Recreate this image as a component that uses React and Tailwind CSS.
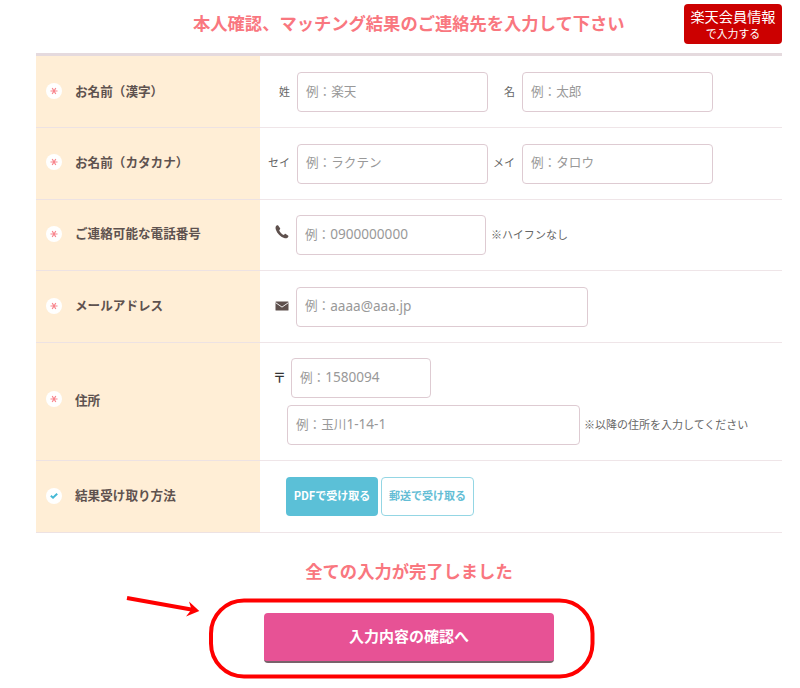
const Badge = ({ check }) => (
  <span className="flex size-4 shrink-0 items-center justify-center rounded-full bg-white">
    {check ? (
      <svg width="8" height="8" viewBox="0 0 8 8" fill="none" stroke="#45b9d6" strokeWidth="1.9">
        <path d="M0.8 3.8 3 5.8 7.2 1.7" />
      </svg>
    ) : (
      <svg width="8" height="8" viewBox="0 0 8 8" fill="none" stroke="#f8858d" strokeWidth="1.2">
        <path d="M0.5 4H7.5M2.2 1 5.8 7M5.8 1 2.2 7" />
      </svg>
    )}
  </span>
);

const Row = ({ label, check, height, lift = 'pb-[2px]', shift = '', children }) => (
  <div className={`flex border-b border-[#efe5e8] ${height}`}>
    <div className={`-mb-px flex w-56 shrink-0 items-center border-b border-[#ede2e3] bg-[#ffeed6] pl-[10px] ${lift}`}>
      <Badge check={check} />
      <span className={`ml-[13px] text-[12.6px] font-bold text-[#5e524f] ${shift}`}>{label}</span>
    </div>
    <div className="flex-1">{children}</div>
  </div>
);

const Field = ({ width, text, latin }) => (
  <span className={`flex h-10 shrink-0 items-center rounded border-[1.5px] border-[#decbd2] bg-white pb-[2px] pl-2 text-[12.6px] text-[#999] ${width}`}>
    例：{text}
    {latin && <span className="font-['Noto_Sans','Noto_Sans_CJK_JP',sans-serif] text-[13.6px] leading-none">{latin}</span>}
  </span>
);

const Hint = ({ className = '', children }) => (
  <span className={`shrink-0 pb-[2px] text-[11px] text-[#666] ${className}`}>{children}</span>
);

export default function App() {
  return (
    <div className="relative h-[688px] w-[800px] overflow-hidden whitespace-nowrap bg-white font-['Noto_Sans_CJK_JP',sans-serif] leading-none">
      <header className="ml-9 flex h-[53px] w-[746px] items-start pt-1">
        <h1 className="ml-[157px] mt-[10px] text-[17.3px] font-bold text-[#f9777f]">
          本人確認、マッチング結果のご連絡先を入力して下さい
        </h1>
        <button className="ml-auto flex h-10 w-[98px] flex-col items-center rounded bg-[#cc0000] pt-[5px] text-white">
          <span className="text-[14.2px] leading-[15px]">楽天会員情報</span>
          <span className="mt-[3px] text-[10.9px] leading-[12px]">で入力する</span>
        </button>
      </header>

      <main className="ml-9 w-[746px] border-t-[3px] border-[#e5dade]">
        <Row label="お名前（漢字）" height="h-[72px]" shift="pt-[1px]">
          <div className="flex items-center pt-4">
            <Hint className="w-[30px] text-right">姓</Hint>
            <span className="w-[7px]" />
            <Field width="w-[191px]" text="楽天" />
            <Hint className="w-[27px] text-right">名</Hint>
            <span className="w-[7px]" />
            <Field width="w-[191px]" text="太郎" />
          </div>
        </Row>
        <Row label="お名前（カタカナ）" height="h-[72px]" lift="pb-[3px]">
          <div className="flex items-center pt-[15.5px]">
            <Hint className="w-[30px] text-right">セイ</Hint>
            <span className="w-[7px]" />
            <Field width="w-[191px]" text="ラクテン" />
            <Hint className="w-[27px] text-right">メイ</Hint>
            <span className="w-[7px]" />
            <Field width="w-[191px]" text="タロウ" />
          </div>
        </Row>
        <Row label="ご連絡可能な電話番号" height="h-[71px]" lift="pb-[3px]">
          <div className="flex items-center pl-[15px] pt-[15px]">
            <svg className="-mt-[6px] mr-[7px]" width="14" height="14" viewBox="0 0 14 14" fill="#5e504d">
              <path d="M1.6.6C.4 1.4.3 3.2.9 4.800c1.300 3.700 4.400 6.900 8.200 8.200 1.700.6 3.300.3 4.200-1.200.3-.5.2-.9-.3-1.200L10.700 9c-.5-.3-.8-.2-1.100.2l-.8.8C6.600 9.100 5 7.400 4.200 5.300l.8-1c.3-.4.3-.7.1-1.100L3.400.8C2.900.2 2.200.2 1.600.6Z" />
            </svg>
            <Field width="w-[190px]" latin="0900000000" />
            <Hint className="ml-[5px]">※ハイフンなし</Hint>
          </div>
        </Row>
        <Row label="メールアドレス" height="h-[72px]">
          <div className="flex items-center pl-[15px] pt-[15.5px]">
            <svg className="-mt-[2px] mr-[7px]" width="14" height="10" viewBox="0 0 14 10">
              <rect x="0.5" y="0.5" width="13" height="9" rx="0.5" fill="#5e504d" />
              <path d="M0.5 1.6 7 6.1 13.5 1.6" fill="none" stroke="white" strokeWidth="0.9" />
            </svg>
            <Field width="w-[292px]" latin="aaaa@aaa.jp" />
          </div>
        </Row>
        <Row label="住所" height="h-[118px]" lift="pb-[5px]" shift="pt-[2px]">
          <div className="flex items-center pl-[13px] pt-[15px]">
            <span className="w-[18px] pb-[4px] text-[13px] font-medium text-[#333]">〒</span>
            <Field width="w-[140px]" latin="1580094" />
          </div>
          <div className="mt-[7px] flex items-center pl-[27px]">
            <Field width="w-[293px]" text="玉川" latin="1-14-1" />
            <Hint className="ml-[4px]">※以降の住所を入力してください</Hint>
          </div>
        </Row>
        <Row label="結果受け取り方法" check height="h-[72px]">
          <div className="flex gap-[3px] pl-[26px] pt-4 text-[11px] font-bold">
            <button className="h-[39px] w-[92px] rounded bg-[#5bc0d7] pb-[2px] text-white">PDFで受け取る</button>
            <button className="h-[39px] w-[93px] rounded border-[1.5px] border-[#94d6e4] bg-white pb-[2px] text-[#63bdd5]">
              郵送で受け取る
            </button>
          </div>
        </Row>
      </main>

      <section className="ml-[264px] flex w-[290px] flex-col items-center pt-[29px]">
        <h2 className="text-[17.3px] font-bold text-[#f9777f]">全ての入力が完了しました</h2>
        <button className="mt-[34px] h-[50px] w-full rounded-[4px] border-b-2 border-[#78636b] bg-[#e75295] pb-[4px] text-[15px] font-bold text-white">
          入力内容の確認へ
        </button>
      </section>

      <svg className="pointer-events-none absolute left-0 top-[580px]" width="800" height="108" fill="none" stroke="#ff0000">
        <rect x="211" y="20.5" width="381.5" height="76" rx="33" strokeWidth="4" />
        <path d="M127 18 194 30" strokeWidth="4" />
        <path d="M189 21.5 199.3 31 186 36.5 191.5 29.5Z" fill="#ff0000" stroke="none" />
      </svg>
    </div>
  );
}
